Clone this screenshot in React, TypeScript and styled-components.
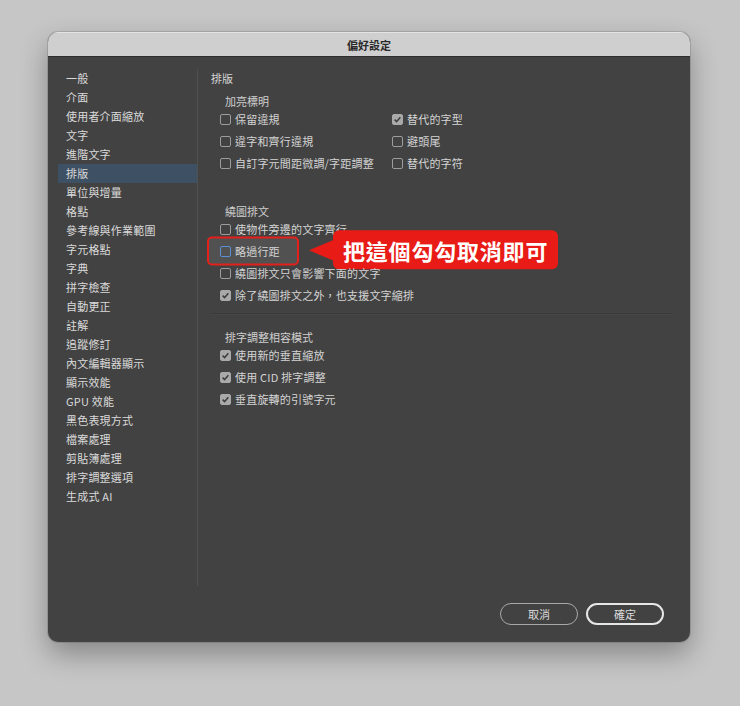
import styled, { createGlobalStyle } from 'styled-components';

const GlobalStyle = createGlobalStyle`
    html, body {
        margin: 0;
        padding: 0;
        background: #c6c6c6;
    }
    body {
        font-family: "Noto Sans CJK TC", "Noto Sans", sans-serif;
        -webkit-font-smoothing: antialiased;
    }
`;

type Option = { label: string; checked?: boolean; focus?: boolean };

const sideItems = [
    '一般',
    '介面',
    '使用者介面縮放',
    '文字',
    '進階文字',
    '排版',
    '單位與增量',
    '格點',
    '參考線與作業範圍',
    '字元格點',
    '字典',
    '拼字檢查',
    '自動更正',
    '註解',
    '追蹤修訂',
    '內文編輯器顯示',
    '顯示效能',
    'GPU 效能',
    '黑色表現方式',
    '檔案處理',
    '剪貼簿處理',
    '排字調整選項',
    '生成式 AI',
];

const highlightLeft: Option[] = [
    { label: '保留違規' },
    { label: '違字和齊行違規' },
    { label: '自訂字元間距微調/字距調整' },
];

const highlightRight: Option[] = [
    { label: '替代的字型', checked: true },
    { label: '避頭尾' },
    { label: '替代的字符' },
];

const wrapOptions: Option[] = [
    { label: '使物件旁邊的文字齊行' },
    { label: '略過行距', focus: true },
    { label: '繞圖排文只會影響下面的文字' },
    { label: '除了繞圖排文之外，也支援文字縮排', checked: true },
];

const compatOptions: Option[] = [
    { label: '使用新的垂直縮放', checked: true },
    { label: '使用 CID 排字調整', checked: true },
    { label: '垂直旋轉的引號字元', checked: true },
];

const CheckRow = ({ label, checked, focus }: Option) => (
    <Row>
        {focus && <Highlight />}
        <Box $checked={checked} $focus={focus}>
            {checked && (
                <svg width="9" height="9" viewBox="0 0 9 9">
                    <path d="M1.6 4.6 L3.6 6.6 L7.4 2.2" fill="none" stroke="#3f3f3f" strokeWidth="1.5" />
                </svg>
            )}
        </Box>
        <Label>{label}</Label>
        {focus && (
            <Callout>
                <Arrow />
                把這個勾勾取消即可
            </Callout>
        )}
    </Row>
);

const App = () => {
    return (
        <Page>
            <GlobalStyle />
            <Window>
                <TitleBar>偏好設定</TitleBar>
                <Body>
                    <Main>
                        <Sidebar>
                            {sideItems.map(item => (
                                <SideItem key={item} $active={item === '排版'}>
                                    {item}
                                </SideItem>
                            ))}
                        </Sidebar>
                        <Content>
                            <Heading>排版</Heading>

                            <GroupTitle>加亮標明</GroupTitle>
                            <TwoCols>
                                <div>
                                    {highlightLeft.map(o => (
                                        <CheckRow key={o.label} {...o} />
                                    ))}
                                </div>
                                <div>
                                    {highlightRight.map(o => (
                                        <CheckRow key={o.label} {...o} />
                                    ))}
                                </div>
                            </TwoCols>

                            <GroupTitle $top={30}>繞圖排文</GroupTitle>
                            <Options>
                                {wrapOptions.map(o => (
                                    <CheckRow key={o.label} {...o} />
                                ))}
                            </Options>

                            <Divider />

                            <GroupTitle $top={16}>排字調整相容模式</GroupTitle>
                            <Options>
                                {compatOptions.map(o => (
                                    <CheckRow key={o.label} {...o} />
                                ))}
                            </Options>
                        </Content>
                    </Main>
                    <Footer>
                        <Button>取消</Button>
                        <Button $primary>確定</Button>
                    </Footer>
                </Body>
            </Window>
        </Page>
    );
};
export default App;

const Page = styled.div`
    width: 740px;
    height: 706px;
    padding: 32px 0 0 48px;
    box-sizing: border-box;
`;

const Window = styled.div`
    width: 642px;
    height: 610px;
    border-radius: 10px;
    overflow: hidden;
    display: flex;
    flex-direction: column;
    background: #424242;
    box-shadow: 0 12px 28px rgba(0, 0, 0, 0.32), 0 0 0 1px rgba(0, 0, 0, 0.12);
`;

const TitleBar = styled.div`
    height: 25px;
    flex: none;
    display: flex;
    align-items: center;
    justify-content: center;
    background: #cfcfcf;
    border-top: 1px solid #e4e4e4;
    border-bottom: 1px solid #2e2e2e;
    box-sizing: border-box;
    font-size: 11px;
    font-weight: bold;
    color: #2a2a2a;
`;

const Body = styled.div`
    flex: 1;
    display: flex;
    flex-direction: column;
    min-height: 0;
`;

const Main = styled.div`
    flex: 1;
    display: flex;
    min-height: 0;
`;

const Sidebar = styled.div`
    width: 149px;
    flex: none;
    margin: 12px 0 4px;
    border-right: 1px solid #505050;
`;

const SideItem = styled.div<{ $active?: boolean }>`
    height: 19px;
    line-height: 19px;
    margin-left: 10px;
    padding-left: 8px;
    font-size: 11px;
    letter-spacing: 0.2px;
    color: #dadada;
    background: ${props => (props.$active ? '#3e5063' : 'transparent')};
`;

const Content = styled.div`
    flex: 1;
    padding: 12px 18px 0 13px;
`;

const Heading = styled.div`
    height: 18px;
    line-height: 18px;
    font-size: 11px;
    color: #d6d6d6;
`;

const GroupTitle = styled.div<{ $top?: number }>`
    margin-top: ${props => props.$top ?? 7}px;
    padding-left: 14px;
    height: 14px;
    line-height: 14px;
    font-size: 11px;
    color: #d0d0d0;
`;

const TwoCols = styled.div`
    display: grid;
    grid-template-columns: 172px 1fr;
    padding-left: 9px;
`;

const Options = styled.div`
    padding-left: 9px;
`;

const Row = styled.div`
    position: relative;
    height: 22px;
    display: flex;
    align-items: center;
    gap: 4px;
`;

const Box = styled.span<{ $checked?: boolean; $focus?: boolean }>`
    position: relative;
    width: 11px;
    height: 11px;
    box-sizing: border-box;
    border-radius: 2px;
    display: flex;
    align-items: center;
    justify-content: center;
    border: 1px solid ${props => (props.$focus ? '#5d8fd4' : props.$checked ? '#a9a9a9' : '#9c9c9c')};
    background: ${props => (props.$checked ? '#a9a9a9' : 'transparent')};
`;

const Label = styled.span`
    position: relative;
    font-size: 11px;
    letter-spacing: 0.2px;
    color: #d4d4d4;
    white-space: nowrap;
`;

const Highlight = styled.span`
    position: absolute;
    left: -13px;
    top: 50%;
    transform: translateY(-50%);
    width: 92px;
    height: 29px;
    box-sizing: border-box;
    border: 2px solid #e3201b;
    border-radius: 5px;
    background: #515151;
`;

const Callout = styled.div`
    position: absolute;
    left: 113px;
    top: 50%;
    transform: translateY(-53%);
    height: 39px;
    padding: 0 10px;
    display: flex;
    align-items: center;
    border-radius: 6px;
    background: #e81b16;
    color: #fff;
    font-size: 22px;
    font-weight: bold;
    letter-spacing: 0.8px;
    white-space: nowrap;
`;

const Arrow = styled.span`
    position: absolute;
    left: -24px;
    top: 50%;
    transform: translateY(-50%);
    width: 0;
    height: 0;
    border-top: 11px solid transparent;
    border-bottom: 11px solid transparent;
    border-right: 26px solid #e81b16;
`;

const Divider = styled.div`
    margin: 7px 0 0 1px;
    height: 1px;
    background: #3a3a3a;
    box-shadow: 0 1px 0 #474747;
`;

const Footer = styled.div`
    height: 52px;
    flex: none;
    display: flex;
    justify-content: flex-end;
    gap: 8px;
    padding: 13px 26px 0 0;
    box-sizing: border-box;
`;

const Button = styled.button<{ $primary?: boolean }>`
    width: 78px;
    height: 22px;
    border-radius: 11px;
    background: transparent;
    border: ${props => (props.$primary ? '2px solid #e6e6e6' : '1.5px solid #a8a8a8')};
    color: #dcdcdc;
    font-family: "Noto Sans CJK TC", sans-serif;
    font-size: 11px;
    padding: 0;
`;
